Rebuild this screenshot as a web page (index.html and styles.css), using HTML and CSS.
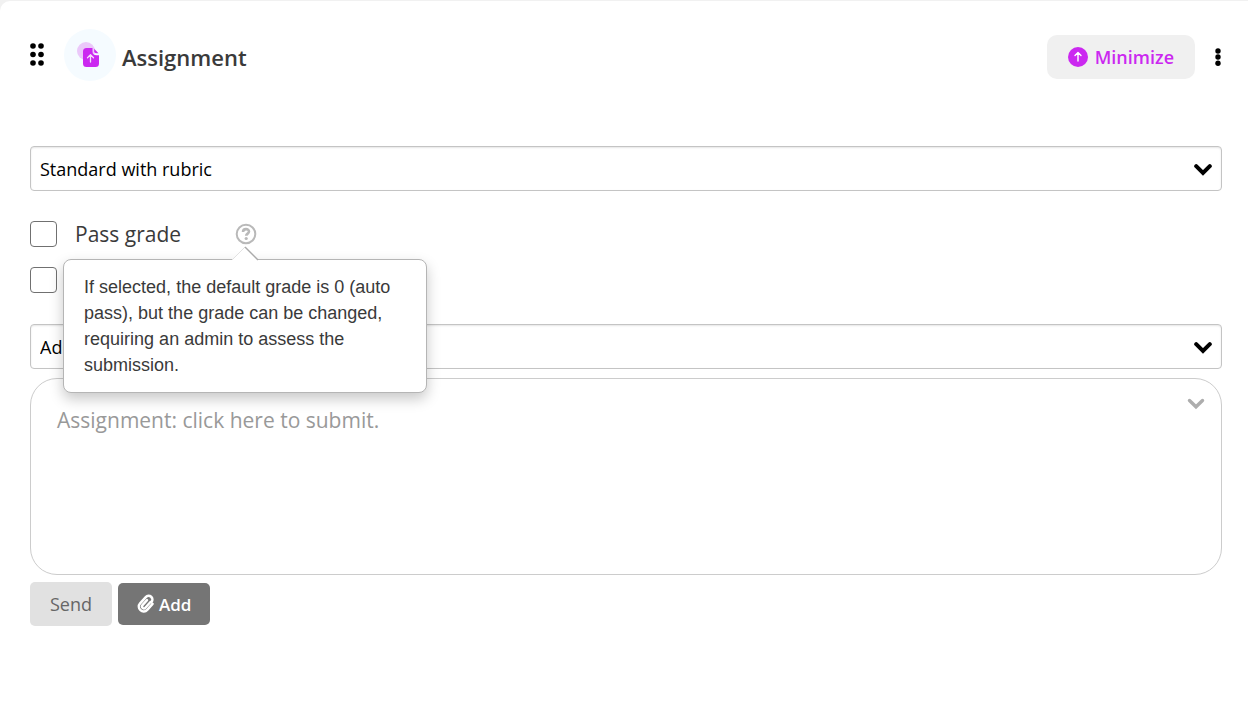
FILE: index.html
```
<!DOCTYPE html>
<html lang="en">
<head>
<meta charset="utf-8">
<meta name="viewport" content="width=device-width, initial-scale=1">
<title>Assignment</title>
<link rel="stylesheet" href="styles.css">
</head>
<body>
<main class="card">
  <header class="header">
    <button class="icon-button drag" type="button" aria-label="Move">
      <svg width="14" height="24" viewBox="0 0 14 24"><g fill="#000"><circle cx="3" cy="3" r="2.8"/><circle cx="11" cy="3" r="2.8"/><circle cx="3" cy="11.500" r="2.8"/><circle cx="11" cy="11.500" r="2.8"/><circle cx="3" cy="20" r="2.8"/><circle cx="11" cy="20" r="2.8"/></g></svg>
    </button>
    <span class="badge">
      <svg width="52" height="52" viewBox="0 0 52 52"><circle cx="22" cy="22" r="9" fill="#ebc8fa"/><path d="M22.500 19h6v3.500q0 3.800 4 3.800H35V34.500q0 3.500-3.500 3.500h-9q-3.500 0-3.500-3.500V22.500q0-3.500 3.500-3.500z" fill="#cb28f0"/><path d="M30.200 19.800l4.300 4.500H32q-1.800 0-1.800-2z" fill="#cb28f0"/><path d="M26.500 33v-7M23.500 28.800l3-3 3 3" fill="none" stroke="#f6dcfc" stroke-width="1.300" stroke-linecap="round" stroke-linejoin="round"/></svg>
    </span>
    <h1 class="title">Assignment</h1>
    <button class="minimize" type="button">
      <svg width="20" height="20" viewBox="0 0 20 20"><circle cx="10" cy="10" r="10" fill="#cb28f0"/><path d="M10 14V6M7 8.500L10 5.500 13 8.500" fill="none" stroke="#fff" stroke-width="1.400" stroke-linecap="round" stroke-linejoin="round"/></svg>
      Minimize
    </button>
    <button class="icon-button more" type="button" aria-label="More options">
      <svg width="8" height="18" viewBox="0 0 8 18"><g fill="#000"><circle cx="4" cy="3" r="2.700"/><circle cx="4" cy="9" r="2.700"/><circle cx="4" cy="15.300" r="2.700"/></g></svg>
    </button>
  </header>

  <form class="form">
    <div class="select-box">
      <select class="select" aria-label="Assignment type"><option>Standard with rubric</option></select>
      <svg class="chevron" width="18" height="12" viewBox="0 0 18 12"><path d="M2.200 2.200L9 9l6.800-6.800" fill="none" stroke="#000" stroke-width="4" stroke-linecap="round"/></svg>
    </div>

    <div class="checks">
      <div class="check-row">
        <input class="check" type="checkbox" id="pass">
        <label class="check-label" for="pass">Pass grade</label>
        <span class="help">
          <button class="icon-button" type="button" aria-label="Help" aria-describedby="pass-tip">
            <svg width="22" height="22" viewBox="0 0 22 22"><circle cx="11" cy="11" r="9.300" fill="none" stroke="#b9b9b9" stroke-width="2"/><path d="M8 9C8 5.200 14 5.300 14 8.600c0 2-2.800 2-2.800 4.200" fill="none" stroke="#b9b9b9" stroke-width="2.600"/><circle cx="11.200" cy="15.500" r="1.600" fill="#b9b9b9"/></svg>
          </button>
          <span class="tooltip" id="pass-tip" role="tooltip">
            <svg class="tooltip-arrow" width="28" height="15" viewBox="0 0 28 15"><path d="M0 15L14 1l14 14z" fill="#fff"/><path d="M1 14L14 1" stroke="#e2e2e2" fill="none"/><path d="M14 1l13 13" stroke="#aaa" stroke-width="1.400" fill="none"/></svg>
            If selected, the default grade is 0 (auto pass), but the grade can be changed, requiring an admin to assess the submission.
          </span>
        </span>
      </div>
      <div class="check-row">
        <input class="check" type="checkbox" aria-label="Additional option">
      </div>
    </div>

    <div class="select-box">
      <select class="select" aria-label="Rubric"><option>Add</option></select>
      <svg class="chevron" width="18" height="12" viewBox="0 0 18 12"><path d="M2.200 2.200L9 9l6.800-6.800" fill="none" stroke="#000" stroke-width="4" stroke-linecap="round"/></svg>
    </div>

    <div class="editor">
      <textarea class="editor-text" aria-label="Submission" placeholder="Assignment: click here to submit."></textarea>
      <button class="icon-button editor-toggle" type="button" aria-label="Expand">
        <svg width="18" height="12" viewBox="0 0 18 12"><path d="M2.500 2.500L9 8.800l6.500-6.300" fill="none" stroke="#adadad" stroke-width="3.400" stroke-linecap="round"/></svg>
      </button>
    </div>

    <div class="actions">
      <button class="send" type="button">Send</button>
      <button class="add" type="button">
        <svg width="18" height="20" viewBox="0 0 18 20"><g transform="rotate(42 9 10)" fill="none" stroke="#fff" stroke-width="2.500" stroke-linecap="round"><path d="M13.800 5.500v8a4.800 4.800 0 0 1-9.600 0V5a3.800 3.800 0 0 1 7.600 0"/><path d="M11 5.500v7.700a1.900 1.900 0 0 1-3.800 0V6.500"/></g></svg>
        Add
      </button>
    </div>
  </form>
</main>
</body>
</html>
```
FILE: styles.css
```
* {
  box-sizing: border-box;
}

body {
  margin: 0;
  padding-top: 1px;
  background: #f1f1f1;
  color: #3a3a3a;
  font-family: "Open Sans", "Noto Sans", sans-serif;
}

button,
select,
textarea {
  font-family: inherit;
}

svg {
  display: block;
}

.card {
  min-height: calc(100vh - 1px);
  padding: 28px 26px 40px 30px;
  background: #fff;
  border-radius: 10px 0 0 0;
}

.header {
  display: flex;
  align-items: center;
}

.icon-button {
  display: block;
  padding: 0;
  border: 0;
  background: none;
  cursor: pointer;
}

.drag {
  margin-right: 20px;
}

.badge {
  border-radius: 50%;
  background: #f5fbff;
}

.title {
  margin: 4px auto 0 6px;
  font-size: 22px;
  line-height: 30px;
  font-weight: 600;
}

.minimize {
  display: flex;
  align-items: center;
  gap: 7px;
  height: 44px;
  margin: 4px 19px 0 0;
  padding: 0 21px;
  border: 0;
  border-radius: 10px;
  background: #f0f0f0;
  color: #cb28f0;
  font-size: 18px;
  font-weight: 600;
}

.more {
  margin-top: 4px;
}

.form {
  margin-top: 65px;
}

.select-box {
  position: relative;
}

.select {
  display: block;
  width: 100%;
  height: 45px;
  padding: 0 40px 0 9px;
  border: 1px solid #c4c4c4;
  border-radius: 4px;
  background: #fff;
  box-shadow: inset 0 1px 2px rgba(0, 0, 0, 0.1);
  color: #000;
  font-size: 18px;
  appearance: none;
}

.chevron {
  position: absolute;
  top: 18px;
  right: 10px;
  pointer-events: none;
}

.checks {
  display: grid;
  gap: 20px;
  margin: 30px 0 31px;
}

.check-row {
  display: flex;
  align-items: center;
  height: 26px;
}

.check {
  width: 27px;
  height: 26px;
  margin: 0;
  border: 1px solid #707070;
  border-radius: 4px;
  background: #fff;
  appearance: none;
}

.check:checked {
  background: #cb28f0;
}

.check-label {
  margin: 0 54px 0 18px;
  font-size: 21px;
  line-height: 26px;
}

.help {
  position: relative;
}

.tooltip {
  position: absolute;
  z-index: 1;
  top: 36px;
  left: -172px;
  width: 364px;
  padding: 14px;
  padding-left: 20px;
  border: 1px solid #b5b5b5;
  border-radius: 8px;
  background: #fff;
  box-shadow: 0 6px 14px rgba(0, 0, 0, 0.22);
  font-family: "Liberation Sans", Arial, sans-serif;
  font-size: 18px;
  line-height: 26px;
}

.tooltip-arrow {
  position: absolute;
  top: -14px;
  left: 167px;
}

.editor {
  position: relative;
  margin-top: 9px;
}

.editor-text {
  display: block;
  width: 100%;
  height: 197px;
  padding: 26px;
  border: 1px solid #ccc;
  border-radius: 27px;
  background: #fff;
  color: #333;
  font-size: 21px;
  line-height: 30px;
  resize: none;
}

.editor-text::placeholder {
  color: #999;
}

.editor-toggle {
  position: absolute;
  top: 20px;
  right: 17px;
}

.actions {
  display: flex;
  align-items: center;
  gap: 6px;
  margin-top: 7px;
}

.send,
.add {
  border: 0;
  border-radius: 5px;
}

.send {
  height: 44px;
  padding: 0 20px;
  background: #e1e1e1;
  color: #666;
  font-size: 18px;
}

.add {
  display: flex;
  align-items: center;
  gap: 4px;
  height: 42px;
  padding: 0 19px;
  background: #757575;
  color: #fff;
  font-size: 17px;
  font-weight: 600;
}
```
